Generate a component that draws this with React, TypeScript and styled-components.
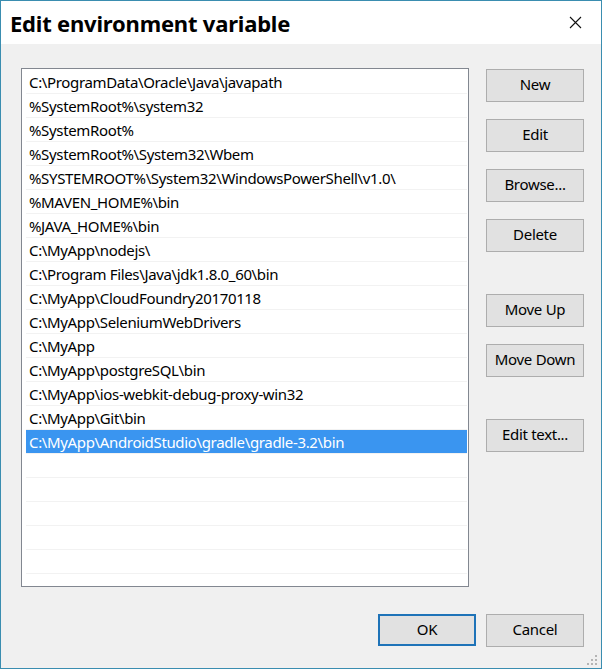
import styled, { createGlobalStyle } from "styled-components";

const GlobalStyle = createGlobalStyle`
  html, body {
    margin: 0;
    padding: 0;
    background: #f0f0f0;
  }
  * {
    box-sizing: border-box;
  }
`;

const FONT = `"Noto Sans", "Open Sans", "DejaVu Sans", sans-serif`;

const Window = styled.div`
  width: 602px;
  height: 669px;
  border: 1px solid #3a8db0;
  background: #f0f0f0;
  display: flex;
  flex-direction: column;
  font-family: ${FONT};
  color: #000;
  position: relative;
`;

const TitleBar = styled.div`
  height: 43px;
  background: #fff;
  display: flex;
  align-items: center;
  justify-content: space-between;
  padding: 0 14px 0 9px;
`;

const Title = styled.h1`
  margin: 0;
  font-size: 22px;
  font-weight: 700;
  letter-spacing: -0.2px;
`;

const CloseButton = styled.button`
  width: 24px;
  height: 24px;
  border: none;
  background: transparent;
  padding: 0;
  display: flex;
  align-items: center;
  justify-content: center;
`;

const Body = styled.div`
  flex: 1;
  display: flex;
  flex-direction: column;
  padding: 24px 17px 0 20px;
`;

const Main = styled.div`
  display: flex;
  gap: 17px;
`;

const ListBox = styled.div`
  width: 448px;
  height: 519px;
  border: 1px solid #828790;
  background: #fff;
  padding: 1px 1px 0 4px;
  overflow: hidden;
`;

const Row = styled.div<{ $selected?: boolean }>`
  height: 24px;
  border-bottom: 1px solid #f2f2f2;
  padding-left: 3px;
  display: flex;
  align-items: center;
  font-size: 15px;
  letter-spacing: -0.35px;
  white-space: nowrap;
  background: ${(p) => (p.$selected ? "#3a95f0" : "transparent")};
  color: ${(p) => (p.$selected ? "#fff" : "#000")};
`;

const ButtonColumn = styled.div`
  display: flex;
  flex-direction: column;
  padding-top: 1px;
`;

const ButtonGroup = styled.div`
  display: flex;
  flex-direction: column;
  gap: 17px;
  & + & {
    margin-top: 42px;
  }
`;

const DialogButton = styled.button<{ $primary?: boolean }>`
  width: 98px;
  height: ${(p) => (p.$primary ? "32px" : "33px")};
  background: #e1e1e1;
  border: ${(p) => (p.$primary ? "2px solid #1e73b8" : "1px solid #adadad")};
  font-family: ${FONT};
  font-size: 15px;
  letter-spacing: -0.3px;
  line-height: 1;
  padding: 0 0 2px;
  color: #000;
`;

const Footer = styled.div`
  display: flex;
  justify-content: flex-end;
  gap: 10px;
  margin-top: 27px;
`;

const Grip = styled.svg`
  position: absolute;
  right: 3px;
  bottom: 2px;
`;

const paths = [
  "C:\\ProgramData\\Oracle\\Java\\javapath",
  "%SystemRoot%\\system32",
  "%SystemRoot%",
  "%SystemRoot%\\System32\\Wbem",
  "%SYSTEMROOT%\\System32\\WindowsPowerShell\\v1.0\\",
  "%MAVEN_HOME%\\bin",
  "%JAVA_HOME%\\bin",
  "C:\\MyApp\\nodejs\\",
  "C:\\Program Files\\Java\\jdk1.8.0_60\\bin",
  "C:\\MyApp\\CloudFoundry20170118",
  "C:\\MyApp\\SeleniumWebDrivers",
  "C:\\MyApp",
  "C:\\MyApp\\postgreSQL\\bin",
  "C:\\MyApp\\ios-webkit-debug-proxy-win32",
  "C:\\MyApp\\Git\\bin",
  "C:\\MyApp\\AndroidStudio\\gradle\\gradle-3.2\\bin",
];

const selectedIndex = paths.length - 1;

export default function App() {
  return (
    <>
      <GlobalStyle />
      <Window>
        <TitleBar>
          <Title>Edit environment variable</Title>
          <CloseButton aria-label="Close">
            <svg width="13" height="13" viewBox="0 0 13 13">
              <path d="M1 1L12 12M12 1L1 12" stroke="#111" strokeWidth="1.1" />
            </svg>
          </CloseButton>
        </TitleBar>
        <Body>
          <Main>
            <ListBox>
              {paths.map((p, i) => (
                <Row key={p} $selected={i === selectedIndex}>
                  {p}
                </Row>
              ))}
              {Array.from({ length: 6 }).map((_, i) => (
                <Row key={`empty-${i}`} />
              ))}
            </ListBox>
            <ButtonColumn>
              <ButtonGroup>
                <DialogButton>New</DialogButton>
                <DialogButton>Edit</DialogButton>
                <DialogButton>Browse...</DialogButton>
                <DialogButton>Delete</DialogButton>
              </ButtonGroup>
              <ButtonGroup>
                <DialogButton>Move Up</DialogButton>
                <DialogButton>Move Down</DialogButton>
              </ButtonGroup>
              <ButtonGroup>
                <DialogButton>Edit text...</DialogButton>
              </ButtonGroup>
            </ButtonColumn>
          </Main>
          <Footer>
            <DialogButton $primary>OK</DialogButton>
            <DialogButton>Cancel</DialogButton>
          </Footer>
        </Body>
        <Grip width="11" height="11" viewBox="0 0 11 11">
          {[
            [8, 0],
            [8, 4],
            [4, 4],
            [8, 8],
            [4, 8],
            [0, 8],
          ].map(([x, y]) => (
            <rect key={`${x}-${y}`} x={x} y={y} width="2" height="2" fill="#b4b4b4" />
          ))}
        </Grip>
      </Window>
    </>
  );
}
